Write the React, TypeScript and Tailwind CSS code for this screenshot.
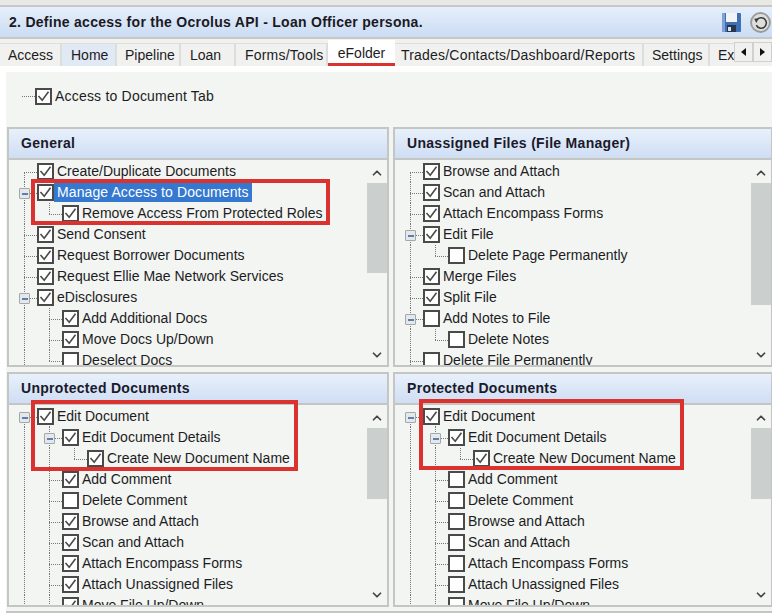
import { type FC, type ReactNode } from 'react';
import { ChevronUp, ChevronDown } from 'lucide-react';

type Node = {
  label: string;
  level: 0 | 1 | 2;
  checked?: boolean;
  toggle?: boolean;
  selected?: boolean;
  // vertical guides that pass through this row: full height or only down to the elbow
  guides?: { level: 0 | 1 | 2; half?: boolean; top?: boolean }[];
};

const checkX = ['ml-[28px]', 'ml-[53px]', 'ml-[78px]'];
const guideX = ['left-[15px]', 'left-[40px]', 'left-[65px]'];
const stubX = ['left-[15px] w-[13px]', 'left-[40px] w-[13px]', 'left-[65px] w-[13px]'];
const toggleX = ['left-[10px]', 'left-[35px]', 'left-[60px]'];

const CheckBox: FC<{ checked?: boolean }> = ({ checked }) => (
  <span className="relative h-[17px] w-[17px] shrink-0 border-2 border-[#4a4a4a] bg-white">
    {checked && (
      <svg viewBox="0 0 13 13" className="absolute inset-0 h-[13px] w-[13px]">
        <path d="M1.5 6 L5.2 10.2 L11.5 1.8" fill="none" stroke="#4a4a4a" strokeWidth="1.6" />
      </svg>
    )}
  </span>
);

const Toggle: FC<{ level: 0 | 1 | 2 }> = ({ level }) => (
  <span
    className={`absolute top-[6px] z-10 flex h-[11px] w-[11px] items-center justify-center rounded-[1px] border-[1.5px] border-[#a4a8aa] bg-[#e4e8ea] ${toggleX[level]}`}
  >
    <span className="h-[2px] w-[6px] bg-[#5d7fae]" />
  </span>
);

const TreeRow: FC<{ node: Node }> = ({ node }) => (
  <div className="relative flex h-[21px] items-center">
    {node.guides?.map((g, i) => (
      <span
        key={i}
        className={`absolute w-0 border-l border-dotted border-[#777] ${guideX[g.level]} ${
          g.top ? 'top-[11px] bottom-0' : g.half ? 'top-0 h-[11px]' : 'inset-y-0'
        }`}
      />
    ))}
    <span className={`absolute top-[11px] h-0 border-t border-dotted border-[#777] ${stubX[node.level]}`} />
    {node.toggle && <Toggle level={node.level} />}
    <div className={`relative flex items-center ${checkX[node.level]}`}>
      <CheckBox checked={node.checked} />
      <span
        className={`whitespace-nowrap px-[3px] text-[14px] leading-[19px] ${
          node.selected ? 'bg-[#3478d0] tracking-[0.1px] text-white' : 'text-[#1c1c24]'
        }`}
      >
        {node.label}
      </span>
    </div>
  </div>
);

const Panel: FC<{
  title: string;
  nodes: Node[];
  thumbClass: string;
  children?: ReactNode;
}> = ({ title, nodes, thumbClass, children }) => (
  <section className="relative flex flex-col border-2 border-[#c4c6c4]">
    <header className="flex h-[31px] shrink-0 items-center border-b-2 border-[#c4c6c4] bg-gradient-to-b from-[#e8f0fb] to-[#cfdef4] pl-[12px] text-[14px] font-bold tracking-[0.3px] text-[#1a1a2a]">
      {title}
    </header>
    <div className="flex min-h-0 flex-1 bg-[#f3f5f2]">
      <div className="min-w-0 flex-1 overflow-hidden pt-[1px]">
        {nodes.map((n) => (
          <TreeRow key={n.label} node={n} />
        ))}
      </div>
      <div className="flex w-[20px] shrink-0 flex-col items-center">
        <ChevronUp className="mt-[6px] h-[14px] w-[14px] shrink-0 text-[#444]" strokeWidth={3} />
        <div className={`mt-[3px] w-full bg-[#cbcfcd] ${thumbClass}`} />
        <div className="flex-1" />
        <ChevronDown className="mb-[3px] h-[14px] w-[14px] shrink-0 text-[#444]" strokeWidth={3} />
      </div>
    </div>
    {children}
  </section>
);

const G0 = { level: 0 as const };
const G1 = { level: 1 as const };

const general: Node[] = [
  { label: 'Create/Duplicate Documents', level: 0, checked: true, guides: [{ level: 0, top: true }] },
  { label: 'Manage Access to Documents', level: 0, checked: true, toggle: true, selected: true, guides: [G0] },
  { label: 'Remove Access From Protected Roles', level: 1, checked: true, guides: [G0, { level: 1, half: true }] },
  { label: 'Send Consent', level: 0, checked: true, guides: [G0] },
  { label: 'Request Borrower Documents', level: 0, checked: true, guides: [G0] },
  { label: 'Request Ellie Mae Network Services', level: 0, checked: true, guides: [G0] },
  { label: 'eDisclosures', level: 0, checked: true, toggle: true, guides: [G0] },
  { label: 'Add Additional Docs', level: 1, checked: true, guides: [G0, G1] },
  { label: 'Move Docs Up/Down', level: 1, checked: true, guides: [G0, G1] },
  { label: 'Deselect Docs', level: 1, guides: [G0, { level: 1, half: true }] },
];

const unassigned: Node[] = [
  { label: 'Browse and Attach', level: 0, checked: true, guides: [{ level: 0, top: true }] },
  { label: 'Scan and Attach', level: 0, checked: true, guides: [G0] },
  { label: 'Attach Encompass Forms', level: 0, checked: true, guides: [G0] },
  { label: 'Edit File', level: 0, checked: true, toggle: true, guides: [G0] },
  { label: 'Delete Page Permanently', level: 1, guides: [G0, { level: 1, half: true }] },
  { label: 'Merge Files', level: 0, checked: true, guides: [G0] },
  { label: 'Split File', level: 0, checked: true, guides: [G0] },
  { label: 'Add Notes to File', level: 0, toggle: true, guides: [G0] },
  { label: 'Delete Notes', level: 1, guides: [G0, { level: 1, half: true }] },
  { label: 'Delete File Permanently', level: 0, guides: [G0] },
];

const docTree = (on: boolean): Node[] => [
  { label: 'Edit Document', level: 0, checked: true, toggle: true, guides: [{ level: 0, top: true }, { level: 1, top: true }] },
  { label: 'Edit Document Details', level: 1, checked: true, toggle: true, guides: [G0, G1] },
  { label: 'Create New Document Name', level: 2, checked: true, guides: [G0, G1, { level: 2, half: true }] },
  { label: 'Add Comment', level: 1, checked: on, guides: [G0, G1] },
  { label: 'Delete Comment', level: 1, guides: [G0, G1] },
  { label: 'Browse and Attach', level: 1, checked: on, guides: [G0, G1] },
  { label: 'Scan and Attach', level: 1, checked: on, guides: [G0, G1] },
  { label: 'Attach Encompass Forms', level: 1, checked: on, guides: [G0, G1] },
  { label: 'Attach Unassigned Files', level: 1, checked: on, guides: [G0, G1] },
  { label: 'Move File Up/Down', level: 1, checked: on, guides: [G0, G1] },
];

const tabs = [
  { label: 'Access', w: 'w-[62px] pl-[8px]' },
  { label: 'Home', w: 'w-[55px] pl-[9px]', tint: true },
  { label: 'Pipeline', w: 'w-[64px] pl-[8px]' },
  { label: 'Loan', w: 'w-[55px] pl-[9px]' },
  { label: 'Forms/Tools', w: 'w-[92px] pl-[9px] tracking-[0.2px]' },
];

const tabsAfter = [
  { label: 'Trades/Contacts/Dashboard/Reports', w: 'w-[249px] pl-[6px] tracking-[0.2px]' },
  { label: 'Settings', w: 'w-[66px] pl-[8px]' },
];

const Tab: FC<{ label: string; w: string; tint?: boolean }> = ({ label, w, tint }) => (
  <div
    className={`flex h-[23px] shrink-0 items-center border-r-2 border-t border-[#dcdedb] text-[14px] text-[#1c1c24] ${w} ${
      tint ? 'bg-[#e1e9f4]' : 'bg-[#f1f2ef]'
    }`}
  >
    {label}
  </div>
);

const SaveIcon = () => (
  <svg viewBox="0 0 19 19" className="h-[19px] w-[19px]">
    <rect x="0" y="0" width="19" height="19" rx="1" fill="#3f6fb5" />
    <rect x="0" y="0" width="3" height="19" fill="#7fa2d6" />
    <rect x="4" y="0" width="11" height="9" fill="#f2f4f8" />
    <rect x="5" y="12" width="9" height="7" fill="#27364f" />
    <rect x="6" y="14" width="3" height="4" fill="#dfe4ea" />
  </svg>
);

const ResetIcon = () => (
  <svg viewBox="0 0 20 20" className="h-[21px] w-[21px]">
    <circle cx="10" cy="10" r="9" fill="#dededc" stroke="#9a9c9b" strokeWidth="1.8" />
    <path d="M6.5 7.5 A5 5 0 1 1 6 12.5" fill="none" stroke="#3a3a3a" strokeWidth="1.5" />
    <path d="M4 6.5 L8.5 6 L6 10.5 Z" fill="#3a3a3a" />
  </svg>
);

const ArrowButton: FC<{ dir: 'left' | 'right' }> = ({ dir }) => (
  <div className="flex h-[20px] w-[19px] items-center justify-center border border-[#cfd1ce] bg-[#f1f2ef]">
    <svg viewBox="0 0 5 8" className="h-[8px] w-[5px]">
      <path d={dir === 'left' ? 'M5 0 L0 4 L5 8 Z' : 'M0 0 L5 4 L0 8 Z'} fill="#111" />
    </svg>
  </div>
);

export default function App() {
  return (
    <div className="flex h-[616px] w-[772px] flex-col overflow-hidden bg-white font-['Liberation_Sans',Arial,sans-serif]">
      <div className="h-[5px] shrink-0 bg-[#e8e8e4]" />
      <div className="flex h-[34px] shrink-0 items-center border-y-2 border-[#c6c8c6] bg-gradient-to-b from-[#e6effb] to-[#cbdcf3] pl-[9px] pr-[1px]">
        <h1 className="flex-1 text-[14px] font-bold tracking-[0.28px] text-[#1a1a24]">
          2. Define access for the Ocrolus API - Loan Officer persona.
        </h1>
        <SaveIcon />
        <div className="ml-[9px]">
          <ResetIcon />
        </div>
      </div>

      <div className="relative flex h-[27px] shrink-0 items-end overflow-hidden bg-[#f1f2ef]">
        {tabs.map((t) => (
          <Tab key={t.label} {...t} />
        ))}
        <div className="relative flex h-[26px] w-[67px] shrink-0 items-start justify-center bg-white pt-[3px] text-[14px] text-[#1c1c24]">
          eFolder
          <span className="absolute inset-x-0 bottom-0 h-[3px] bg-[#d9322f]" />
        </div>
        {tabsAfter.map((t) => (
          <Tab key={t.label} {...t} />
        ))}
        <div className="flex h-[23px] flex-1 items-center border-t border-[#dcdedb] bg-[#f1f2ef] pl-[8px] text-[14px] text-[#1c1c24]">
          Ex
        </div>
        <div className="absolute bottom-[4px] right-0 flex bg-[#f1f2ef]">
          <ArrowButton dir="left" />
          <ArrowButton dir="right" />
        </div>
      </div>

      <div className="h-[6px] shrink-0 bg-white" />

      <main className="ml-[6px] flex min-h-0 flex-1 flex-col bg-[#f3f5f2]">
        <div className="flex h-[55px] shrink-0 items-center pb-[6px] pl-[16px]">
          <span className="h-0 w-[13px] border-t border-dotted border-[#777]" />
          <CheckBox checked />
          <span className="ml-[3px] text-[14px] tracking-[0.2px] text-[#1c1c24]">Access to Document Tab</span>
        </div>

        <div className="grid grid-cols-[382px_380px] grid-rows-[240px_235px] gap-x-[4px] gap-y-[5px] pl-[1px]">
          <Panel title="General" nodes={general} thumbClass="h-[90px]" />
          <Panel title="Unassigned Files (File Manager)" nodes={unassigned} thumbClass="h-[122px]" />
          <Panel title="Unprotected Documents" nodes={docTree(true)} thumbClass="h-[71px]" />
          <Panel title="Protected Documents" nodes={docTree(false)} thumbClass="h-[71px]" />
        </div>
        <div className="mt-[4px] flex-1 border-t-2 border-[#c4c6c4] bg-white" />
      </main>

      {/* red review highlights drawn over the screenshot */}
      <div className="pointer-events-none absolute left-[31px] top-[179px] h-[46px] w-[299px] border-4 border-[#d9322f]" />
      <div className="pointer-events-none absolute left-[31px] top-[400px] h-[71px] w-[267px] border-4 border-[#d9322f]" />
      <div className="pointer-events-none absolute left-[419px] top-[399px] h-[71px] w-[265px] border-4 border-[#d9322f]" />
    </div>
  );
}
